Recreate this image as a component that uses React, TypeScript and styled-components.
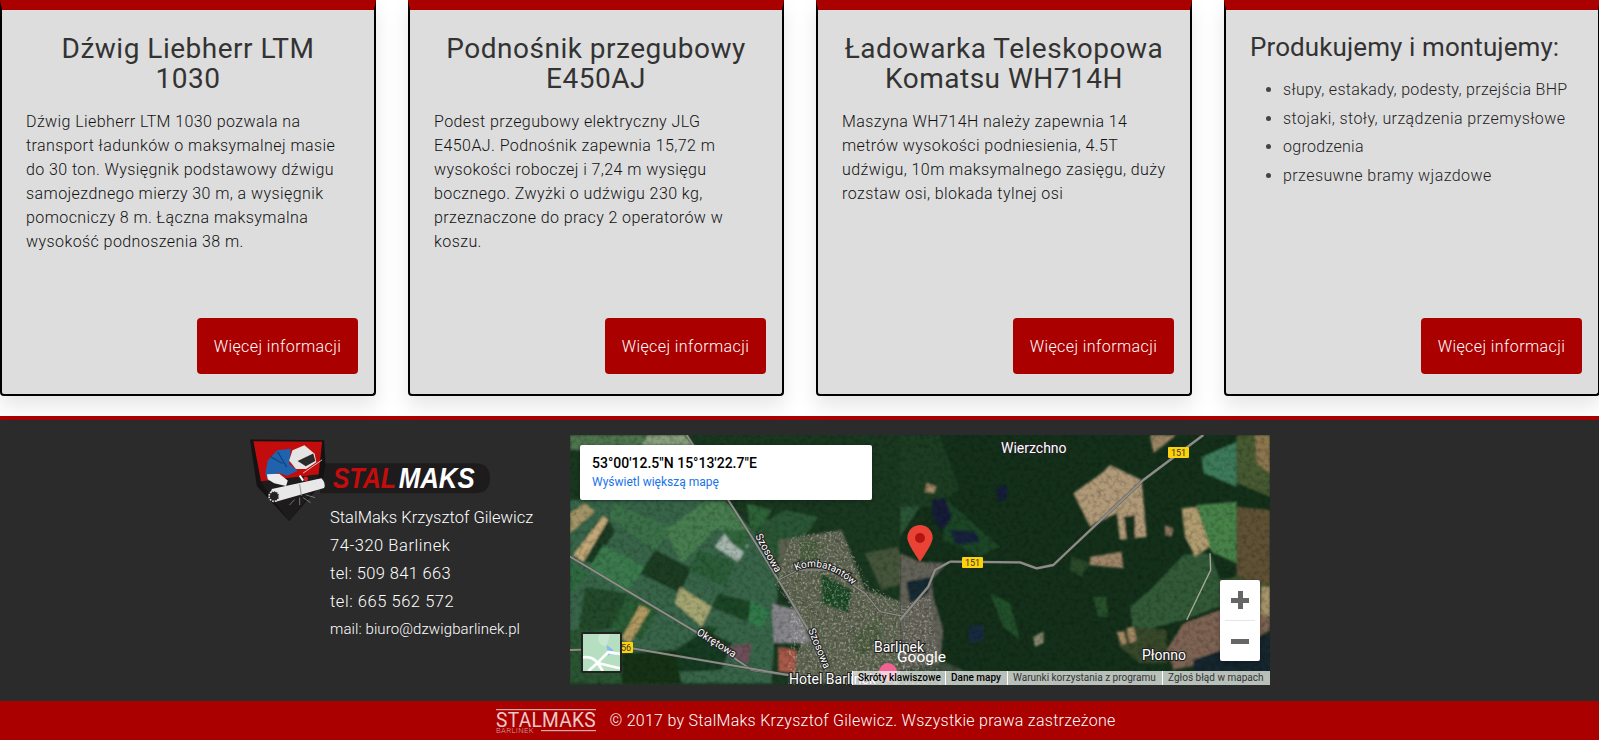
import React from "react";
import styled, { createGlobalStyle } from "styled-components";

const Global = createGlobalStyle`
  html, body { margin: 0; padding: 0; background: #fff; overflow: hidden; }
  body { font-family: Roboto, "Noto Sans", sans-serif; }
  * { box-sizing: border-box; }
`;

const Page = styled.div`
  width: 1599px;
  height: 740px;
  overflow: hidden;
`;

const CardGrid = styled.section`
  display: grid;
  grid-template-columns: repeat(4, 376px);
  gap: 32px;
  height: 416px;
  padding-bottom: 20px;
`;

const Card = styled.article`
  display: flex;
  flex-direction: column;
  background: #ddd;
  border: 2px solid #000;
  border-top: 10px solid #a00;
  border-radius: 0 0 4px 4px;
  padding: 24px 16px 20px 24px;
  box-shadow: 0 10px 20px rgba(0, 0, 0, 0.1);
`;

const CardTitle = styled.h3<{ $left?: boolean }>`
  margin: ${(p) => (p.$left ? "-2px" : "0")} 0 16px;
  padding-right: 8px;
  font-size: ${(p) => (p.$left ? "26px" : "28px")};
  font-weight: 400;
  line-height: 30px;
  letter-spacing: ${(p) => (p.$left ? "0.1px" : "0.5px")};
  color: #333;
  white-space: nowrap;
  text-align: ${(p) => (p.$left ? "left" : "center")};
`;

const CardText = styled.p`
  margin: 0;
  font-size: 16px;
  line-height: 24px;
  letter-spacing: 0.42px;
  font-weight: 300;
  color: #111;
  white-space: nowrap;
`;

const CardList = styled.ul`
  margin: 0;
  padding: 0 0 0 33px;
  font-size: 16px;
  font-weight: 300;
  color: #222;
  white-space: nowrap;
`;

const CardItem = styled.li<{ $track: number }>`
  line-height: 24px;
  margin-bottom: 4.7px;
  letter-spacing: ${(p) => p.$track}px;
  &::marker { color: #444; }
`;

const MoreButton = styled.a`
  display: flex;
  align-items: center;
  justify-content: center;
  margin-top: auto;
  align-self: flex-end;
  width: 161px;
  height: 56px;
  background: #a00;
  border-radius: 4px;
  color: #fff;
  font-size: 16px;
  font-weight: 300;
  letter-spacing: 0.42px;
`;

const Footer = styled.footer`
  border-top: 4px solid #a00;
  background: #2b2b2b;
  height: 285px;
`;

const FooterRow = styled.div`
  display: flex;
  padding: 15px 0 0 250px;
`;

const Contact = styled.div`
  width: 320px;
  color: #fff;
`;

const Logo = styled.svg`
  display: block;
  width: 245px;
  height: 87px;
  margin-bottom: -18px;
`;

const ContactLine = styled.div<{ $small?: boolean; $track?: number }>`
  margin-left: 80px;
  height: ${(p) => (p.$small ? "26px" : "28px")};
  line-height: ${(p) => (p.$small ? "26px" : "28px")};
  font-size: ${(p) => (p.$small ? "15px" : "16.5px")};
  font-weight: 300;
  letter-spacing: ${(p) => p.$track ?? 0}px;
  white-space: nowrap;
`;

const MapFrame = styled.div`
  position: relative;
  width: 700px;
  height: 250px;
  overflow: hidden;
  background: #16301b;
`;

const MapArt = styled.svg`
  display: block;
  width: 700px;
  height: 250px;
`;

const InfoBox = styled.div`
  position: absolute;
  left: 10px;
  top: 10px;
  width: 292px;
  height: 55px;
  padding: 9px 12px;
  background: #fff;
  border-radius: 2px;
  box-shadow: 0 1px 4px rgba(0, 0, 0, 0.3);
`;

const InfoCoords = styled.div`
  font-size: 14px;
  font-weight: 500;
  line-height: 18px;
  color: #000;
`;

const InfoLink = styled.div`
  margin-top: 3px;
  font-size: 12px;
  line-height: 14px;
  color: #1a73e8;
`;

const MiniMap = styled.svg`
  position: absolute;
  left: 11px;
  top: 197px;
  width: 41px;
  height: 41px;
  border: 2px solid #222;
  border-radius: 2px;
  display: block;
`;

const ZoomControl = styled.div`
  position: absolute;
  left: 650px;
  top: 145px;
  width: 40px;
  height: 81px;
  display: flex;
  flex-direction: column;
  background: #fff;
  border-radius: 2px;
  box-shadow: 0 1px 4px rgba(0, 0, 0, 0.3);
`;

const ZoomSign = styled.div`
  position: relative;
  flex: 1;
  display: flex;
  align-items: center;
  justify-content: center;
`;

const ZoomRule = styled.div`
  height: 1px;
  margin: 0 5px;
  background: #e6e6e6;
`;

const ZoomBar = styled.span<{ $vertical?: boolean }>`
  position: absolute;
  background: #666;
  width: ${(p) => (p.$vertical ? "5px" : "18px")};
  height: ${(p) => (p.$vertical ? "18px" : "5px")};
`;

const Attribution = styled.div`
  position: absolute;
  right: 0;
  bottom: 0;
  left: 282px;
  height: 14px;
  display: flex;
  background: rgba(255, 255, 255, 0.7);
  font-size: 10px;
  line-height: 14px;
  color: #222;
  white-space: nowrap;
`;

const AttrItem = styled.span<{ $w: number; $strong?: boolean }>`
  flex: 0 0 ${(p) => p.$w}px;
  padding-left: 5px;
  border-left: 1px solid #fff;
  color: ${(p) => (p.$strong ? "#000" : "#333")};
  font-weight: ${(p) => (p.$strong ? 500 : 400)};
`;

const CopyBar = styled.div`
  display: flex;
  align-items: center;
  justify-content: center;
  height: 39px;
  background: #a00;
  color: #fff;
  font-size: 16px;
  font-weight: 300;
  letter-spacing: 0.28px;
  padding-left: 13px;
`;

const CopyLogo = styled.svg`
  display: block;
  width: 101px;
  height: 28px;
  margin-right: 12px;
`;

type Poly = [string, string];

const westFields: Poly[] = [
  ["15,15 360,15 400,60 15,60", "#4f7450"],
  ["250,15 360,15 385,45 230,45", "#88a07e"],
  ["15,210 480,210 560,300 640,450 620,760 15,760", "#38654a"],
  ["15,250 60,220 90,245 15,310", "#a39568"],
  ["115,258 130,270 55,395 25,375", "#c2a877"],
  ["130,270 150,300 95,400 58,395", "#1d3a22"],
  ["150,220 330,300 270,360 130,265", "#3b7148"],
  ["300,300 420,215 480,215 560,300 450,300 350,400", "#477d50"],
  ["270,360 380,415 345,490 225,430", "#1d3d22"],
  ["400,360 510,400 480,470 370,420", "#2c5d39"],
  ["480,308 550,345 520,395 450,350", "#a8b8b0"],
  ["345,470 440,530 410,590 330,520", "#a5a672"],
  ["115,345 240,410 185,490 70,420", "#3a7a4e"],
  ["15,400 70,430 15,490", "#2f6b3f"],
  ["60,470 185,490 160,590 40,610", "#234a2a"],
  ["190,490 280,540 230,630 140,590", "#2b5c34"],
  ["225,525 255,540 195,640 170,625", "#b09a62"],
  ["460,490 575,520 545,575 440,530", "#1d4425"],
  ["555,510 615,545 590,595 550,575", "#30794a"],
  ["410,590 465,590 440,615 405,605", "#1c4a27"],
  ["420,600 500,640 470,720 350,725 300,680", "#193a20"],
  ["15,600 170,600 170,760 15,760", "#2a5531"],
  ["170,670 330,660 350,760 170,760", "#163019"],
  ["545,220 620,240 585,310 555,290", "#2f6339"],
  ["560,300 660,240 760,260 680,380 640,450", "#2c5735"],
  ["470,300 555,300 540,370 500,340", "#33663e"],
  ["490,650 560,640 550,700 490,680", "#6e505a"],
];

const townWest: Poly[] = [
  ["640,330 830,300 900,480 1020,520 1020,760 670,760 720,600 640,450", "#5c6450"],
  ["620,520 700,540 735,640 625,640", "#85858a"],
  ["640,650 695,660 690,730 640,725", "#a85a48"],
  ["770,430 860,480 850,550 770,520", "#1f4a28"],
  ["900,370 1000,350 1020,460 950,480", "#44553a"],
  ["700,330 760,330 760,390 710,400", "#4a5c3c"],
  ["860,620 950,560 950,640 880,680", "#4e5c42"],
];

const eastFields: Poly[] = [
  ["0,15 120,15 180,180 100,230 0,230", "#1a3c22"],
  ["0,230 60,230 0,320", "#2c5534"],
  ["80,160 110,170 100,190 75,185", "#a08a68"],
  ["130,200 210,270 300,350 240,380 130,330", "#1f4426"],
  ["750,15 830,15 760,70", "#9a8464"],
  ["905,80 1010,35 1010,170 910,130", "#3d7a5a"],
  ["1010,15 1110,15 1110,200 1010,160", "#465a30"],
  ["1065,15 1110,15 1110,130 1070,100", "#8b7650"],
  ["520,190 605,130 630,105 725,150 740,320 660,330 650,250 570,290", "#b09a78"],
  ["672,260 705,255 705,325 680,330", "#14301a"],
  ["570,380 665,365 670,415 570,405", "#a0876b"],
  ["515,380 570,400 545,440 510,420", "#2a4a2a"],
  ["795,285 820,295 815,320 795,315", "#8c7660"],
  ["690,530 750,480 850,375 930,370 960,450 960,530 850,570 700,610", "#335a38"],
  ["890,225 1010,215 1010,400 940,370 925,350", "#47824a"],
  ["845,235 890,230 930,350 885,380 855,320", "#b09c70"],
  ["1010,230 1110,240 1110,470 1010,440", "#5f5134"],
  ["1010,440 1110,470 1110,560 960,560 960,450", "#3f5c36"],
  ["1085,470 1110,470 1110,560 1080,555", "#a8946c"],
  ["850,580 960,540 1110,560 1110,600 960,690 820,720 800,660", "#7d6352"],
  ["880,690 1110,610 1110,725 880,725", "#13252f"],
  ["650,610 700,590 800,600 800,700 720,700 660,650", "#37482a"],
  ["650,605 672,605 680,640 665,645", "#a68a66"],
  ["680,595 700,590 710,630 690,640", "#a68a66"],
  ["270,490 330,520 360,630 310,590", "#23502a"],
  ["580,500 620,500 625,560 595,560", "#27502b"],
  ["0,700 120,690 200,725 0,725", "#3e4d3e"],
];

const lakes: Poly[] = [
  ["95,210 135,205 155,260 130,300 100,270", "#141f38"],
  ["150,300 225,305 240,335 170,345", "#17233a"],
  ["290,175 320,165 322,205 295,215", "#121f3a"],
  ["205,590 250,585 250,630 210,640", "#182c40"],
  ["400,620 430,605 430,640 405,650", "#8c8c70"],
];

const townEast: Poly[] = [
  ["0,370 60,395 140,400 95,450 100,500 130,600 120,700 0,720", "#646258"],
  ["20,455 95,440 85,490 30,520", "#182a32"],
];

const Fields = ({ list, filter }: { list: Poly[]; filter?: string }) => (
  <g filter={filter}>
    {list.map(([points, fill]) => (
      <polygon key={points} points={points} fill={fill} />
    ))}
  </g>
);

const Road = ({ d, w = 6 }: { d: string; w?: number }) => (
  <g fill="none" strokeLinejoin="round">
    <path d={d} stroke="#3a3a36" strokeWidth={w + 3} opacity={0.55} />
    <path d={d} stroke="#8d8d88" strokeWidth={w} />
  </g>
);

const labelStyle = {
  fontFamily: "Roboto, sans-serif",
  paintOrder: "stroke",
  stroke: "#222",
  strokeWidth: 2.2,
  fill: "#fff",
} as const;

const RoadLabel = ({ id, d, children, size = 10.5 }: { id: string; d: string; children: string; size?: number }) => (
  <>
    <path id={id} d={d} fill="none" />
    <text style={labelStyle} fontSize={size}>
      <textPath href={`#${id}`}>{children}</textPath>
    </text>
  </>
);

const Shield = ({ x, y, w = 21, label }: { x: number; y: number; w?: number; label: string }) => (
  <g>
    <rect x={x} y={y} width={w} height={11} rx={1} fill="#fdd20a" />
    <text x={x + w / 2} y={y + 9} fontSize={9} textAnchor="middle" fill="#333" fontFamily="Roboto, sans-serif">
      {label}
    </text>
  </g>
);

const SatelliteMap = () => (
  <MapArt viewBox="0 0 700 250">
    <defs>
      <filter id="soft" x="-5%" y="-5%" width="110%" height="110%">
        <feGaussianBlur stdDeviation="2.6" />
      </filter>
      <filter id="grain" x="0" y="0" width="100%" height="100%">
        <feTurbulence type="fractalNoise" baseFrequency="0.22" numOctaves="3" seed="7" />
        <feColorMatrix values="0 0 0 0 0  0 0 0 0 0  0 0 0 0 0  1.6 0 0 0 -0.66" />
      </filter>
      <filter id="specks" x="0" y="0" width="100%" height="100%">
        <feTurbulence type="fractalNoise" baseFrequency="0.42" numOctaves="2" seed="3" />
        <feColorMatrix values="0 0 0 0 0.8  0 0 0 0 0.74  0 0 0 0 0.68  2.6 0 0 0 -1.25" />
      </filter>
      <clipPath id="townClip">
        <polygon points="222,100 270,95 300,150 335,170 360,160 368,230 372,250 218,250 220,170 205,150" />
      </clipPath>
    </defs>

    <g transform="scale(0.33333) translate(-15,-15)">
      <rect x="15" y="15" width="1005" height="750" fill="#1a3820" />
      <Fields list={westFields} filter="url(#soft)" />
      <Fields list={townWest} filter="url(#soft)" />
    </g>
    <g transform="translate(330,-5) scale(0.33333)">
      <rect x="0" y="15" width="1110" height="750" fill="#14301a" />
      <Fields list={eastFields} filter="url(#soft)" />
      <Fields list={townEast} filter="url(#soft)" />
      <Fields list={lakes} filter="url(#soft)" />
    </g>

    <rect width="700" height="250" filter="url(#grain)" opacity="0.3" />
    <rect width="700" height="250" filter="url(#specks)" clipPath="url(#townClip)" opacity="0.5" />

    <g transform="scale(0.33333) translate(-15,-15)">
      <Road d="M365,15 L560,320 L640,450 L730,600 L780,720" />
      <Road d="M15,380 L400,610 L560,720 L670,735" />
      <Road d="M15,660 L200,655 L670,735" />
      <Road d="M640,450 L700,420 L800,420 L900,490 L945,545 L1020,560" w={4} />
    </g>
    <g transform="translate(330,-5) scale(0.33333)">
      <Road d="M150,395 L360,397 L410,415 L460,405 L730,150 L910,15" w={7} />
      <Road d="M150,395 L105,420 L85,470 L0,570" w={7} />
      <path d="M930,370 L932,420 L860,570" stroke="#a8a89a" strokeWidth="4" fill="none" />
      <path d="M60,395 C22,340 22,327 22,323 A38,38 0 0 1 98,323 C98,327 98,340 60,395Z" fill="#ea4335" />
      <circle cx="60" cy="324" r="15" fill="#b31412" />
    </g>

    <RoadLabel id="r1" d="M185,101 L209,144">Szosowa</RoadLabel>
    <RoadLabel id="r2" d="M238,195 L255,236">Szosowa</RoadLabel>
    <RoadLabel id="r3" d="M126,199 L164,223">Okrętowa</RoadLabel>
    <RoadLabel id="r4" d="M226,136 Q252,123 284,151" size={10}>Kombatantów</RoadLabel>

    <Shield x={392} y={122} label="151" />
    <Shield x={598} y={12} label="151" />
    <Shield x={49} y={207} w={14} label="56" />

    <text x="431" y="18" fontSize="14" style={labelStyle}>Wierzchno</text>
    <text x="572" y="225" fontSize="14" style={labelStyle}>Płonno</text>
    <text x="304" y="217" fontSize="14" style={labelStyle}>Barlinek</text>
    <text x="219" y="249" fontSize="14" style={labelStyle}>Hotel Barlinek</text>
    <circle cx="318" cy="237" r="9" fill="#f06292" />
    <text x="327" y="227" fontSize="15.5" fontFamily="Roboto, sans-serif" fill="#fff">
      Google
    </text>
  </MapArt>
);

const LogoMark = () => (
  <Logo viewBox="0 0 735 261">
    <path d="M210,85 H675 Q720,85 720,130 Q720,175 675,175 H210Z" fill="#1e1b1c" />
    <g transform="translate(-4,-6) scale(1.02)">
      <path d="M4,19 L222,21 L226,95 L214,150 L119,259 L24,156Z" fill="#141212" />
      <path d="M14,24 L216,26 L206,121 L119,210 L36,142Z" fill="#c30d0d" />
      <path d="M36,142 L206,121 L195,165 L119,259 L50,165Z" fill="#1d1b1b" />
      <path d="M49,121 L56,81 L84,51 L124,46 L119,91 L144,111 L114,126 L84,116 L59,141Z" fill="#1f62ae" />
      <path d="M65,70 L100,90 M85,55 L112,100" stroke="#123c74" strokeWidth="3" fill="none" />
      <path d="M54,121 L90,120 L115,140 L110,156 L75,148 L56,136Z" fill="#ececec" />
      <path d="M119,81 L129,51 L164,36 L194,61 L199,86 L169,106 L139,106Z" fill="#e4e4e4" />
      <path d="M144,82 L190,60 L196,82 L168,98Z" fill="#2a2a2a" />
      <path d="M160,118 L216,79" stroke="#ddd" strokeWidth="2.5" />
      <circle cx="168" cy="135" r="7" fill="#d8202a" />
      <path d="M150,125 L160,140" stroke="#fff" strokeWidth="6" />
      <path d="M68,165 L214,133 Q228,148 222,162 L80,202 Q58,185 68,165Z" fill="#e8e8e8" />
      <path d="M150,150 L155,184" stroke="#9a9a9a" strokeWidth="3" />
      <path d="M160,190 L182,205 M150,190 L150,212 M135,196 L120,212 M168,182 L195,190" stroke="#ccc" strokeWidth="1.5" />
      <circle cx="75" cy="186" r="15" fill="#222" stroke="#ddd" strokeWidth="5" strokeDasharray="5 3" />
    </g>
    <text x="248" y="160" fontFamily="'Liberation Sans', sans-serif" fontStyle="italic" fontWeight="700" fontSize="88" textLength="190" lengthAdjust="spacingAndGlyphs" fill="#c30d0d">
      STAL
    </text>
    <text x="446" y="160" fontFamily="'Liberation Sans', sans-serif" fontStyle="italic" fontWeight="700" fontSize="88" textLength="228" lengthAdjust="spacingAndGlyphs" fill="#fff">
      MAKS
    </text>
  </Logo>
);

const FooterLogo = () => (
  <CopyLogo viewBox="0 0 101 28">
    <rect x="0" y="2" width="100" height="1.2" fill="#d8aaaa" />
    <text x="0" y="19.5" fontFamily="Roboto, sans-serif" fontWeight="400" fontSize="19.5" textLength="100" lengthAdjust="spacingAndGlyphs" fill="#eccaca">
      STALMAKS
    </text>
    <text x="0" y="26" fontFamily="Roboto, sans-serif" fontSize="6.3" textLength="38" lengthAdjust="spacingAndGlyphs" fill="#d8a0a0">BARLINEK</text>
    <rect x="45" y="23" width="55" height="1.2" fill="#d8aaaa" />
  </CopyLogo>
);

const cards = [
  {
    title: ["Dźwig Liebherr LTM", "1030"],
    text: [
      "Dźwig Liebherr LTM 1030 pozwala na",
      "transport ładunków o maksymalnej masie",
      "do 30 ton. Wysięgnik podstawowy dźwigu",
      "samojezdnego mierzy 30 m, a wysięgnik",
      "pomocniczy 8 m. Łączna maksymalna",
      "wysokość podnoszenia 38 m.",
    ],
  },
  {
    title: ["Podnośnik przegubowy", "E450AJ"],
    text: [
      "Podest przegubowy elektryczny JLG",
      "E450AJ. Podnośnik zapewnia 15,72 m",
      "wysokości roboczej i 7,24 m wysięgu",
      "bocznego. Zwyżki o udźwigu 230 kg,",
      "przeznaczone do pracy 2 operatorów w",
      "koszu.",
    ],
  },
  {
    title: ["Ładowarka Teleskopowa", "Komatsu WH714H"],
    text: [
      "Maszyna WH714H należy zapewnia 14",
      "metrów wysokości podniesienia, 4.5T",
      "udźwigu, 10m maksymalnego zasięgu, duży",
      "rozstaw osi, blokada tylnej osi",
    ],
  },
];

const products = [
  { text: "słupy, estakady, podesty, przejścia BHP", track: 0.32 },
  { text: "stojaki, stoły, urządzenia przemysłowe", track: 0.42 },
  { text: "ogrodzenia", track: 0.3 },
  { text: "przesuwne bramy wjazdowe", track: 0.42 },
];

export default function App() {
  return (
    <Page>
      <Global />
      <CardGrid>
        {cards.map((card) => (
          <Card key={card.title[0]}>
            <CardTitle>
              {card.title[0]}
              <br />
              {card.title[1]}
            </CardTitle>
            <CardText>
              {card.text.map((line) => (
                <React.Fragment key={line}>
                  {line}
                  <br />
                </React.Fragment>
              ))}
            </CardText>
            <MoreButton>Więcej informacji</MoreButton>
          </Card>
        ))}
        <Card>
          <CardTitle $left>Produkujemy i montujemy:</CardTitle>
          <CardList>
            {products.map((item) => (
              <CardItem key={item.text} $track={item.track}>{item.text}</CardItem>
            ))}
          </CardList>
          <MoreButton>Więcej informacji</MoreButton>
        </Card>
      </CardGrid>
      <Footer>
        <FooterRow>
          <Contact>
            <LogoMark />
            <ContactLine>StalMaks Krzysztof Gilewicz</ContactLine>
            <ContactLine $track={0.55}>74-320 Barlinek</ContactLine>
            <ContactLine $track={0.35}>tel: 509 841 663</ContactLine>
            <ContactLine $track={0.55}>tel: 665 562 572</ContactLine>
            <ContactLine $small $track={0.1}>mail: biuro@dzwigbarlinek.pl</ContactLine>
          </Contact>
          <MapFrame>
            <SatelliteMap />
            <InfoBox>
              <InfoCoords>53°00'12.5"N 15°13'22.7"E</InfoCoords>
              <InfoLink>Wyświetl większą mapę</InfoLink>
            </InfoBox>
            <MiniMap viewBox="0 0 41 41">
              <rect width="41" height="41" fill="#b5dfc0" />
              <path d="M18,0 Q14,12 26,14 L30,0Z" fill="#c9e8d0" />
              <path d="M26,12 L34,18 L28,24Z" fill="#8ab8e8" />
              <path d="M0,26 Q10,24 16,32 L22,41 M16,32 L28,20 L41,22 M6,41 L16,32 L41,38" stroke="#fff" strokeWidth="3" fill="none" />
            </MiniMap>
            <ZoomControl>
              <ZoomSign>
                <ZoomBar />
                <ZoomBar $vertical />
              </ZoomSign>
              <ZoomRule />
              <ZoomSign>
                <ZoomBar />
              </ZoomSign>
            </ZoomControl>
            <Attribution>
              <AttrItem $w={93} $strong>Skróty klawiszowe</AttrItem>
              <AttrItem $w={62} $strong>Dane mapy</AttrItem>
              <AttrItem $w={155}>Warunki korzystania z programu</AttrItem>
              <AttrItem $w={108}>Zgłoś błąd w mapach</AttrItem>
            </Attribution>
          </MapFrame>
        </FooterRow>
      </Footer>
      <CopyBar>
        <FooterLogo />© 2017 by StalMaks Krzysztof Gilewicz. Wszystkie prawa zastrzeżone
      </CopyBar>
    </Page>
  );
}
